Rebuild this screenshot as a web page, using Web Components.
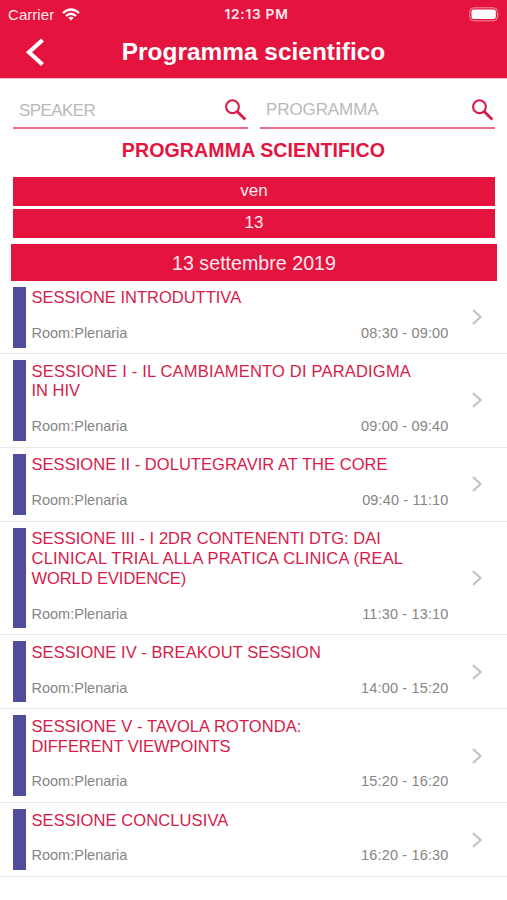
<!DOCTYPE html>
<html lang="it">
<head>
<meta charset="utf-8">
<title>Programma scientifico</title>
<style>
html,body{margin:0;padding:0;background:#fff}
body{width:507px;height:900px;overflow:hidden;font-family:"Liberation Sans",Arial,sans-serif;--red:#e5143f;--accent:#d81b4a}
</style>
</head>
<body>
<program-screen></program-screen>
<script>
const define = (name, html, setup) => customElements.define(name, class extends HTMLElement {
  connectedCallback() {
    if (this.shadowRoot) return;
    const root = this.attachShadow({ mode: 'open' });
    root.innerHTML = html;
    if (setup) setup(this, root);
  }
});

define('status-bar', `
<style>
:host{display:grid;grid-template-columns:1fr auto 1fr;align-items:center;height:27px;padding:0 6px 0 8px;color:#ffe9ee}
.left{display:flex;align-items:center;gap:8px;font-size:15px;line-height:27px;letter-spacing:.05px}
.time{font:600 13.7px/29px Inter,"Liberation Sans",sans-serif;letter-spacing:.75px;margin-right:-4px}
.right{display:flex;justify-content:flex-end}
svg{display:block}
</style>
<div class="left"><span>Carrier</span>
<svg width="18" height="13" viewBox="0 0 18 13" fill="none" stroke="#fff" stroke-width="2.3"><path d="M1 5Q9-2 17 5"/><path d="M4 8Q9 3.5 14 8"/><path d="M9 12.5L6.3 9.8Q9 7.6 11.7 9.8Z" fill="#fff" stroke="none"/></svg></div>
<span class="time">12:13 PM</span>
<div class="right"><svg width="32" height="15" viewBox="0 0 32 15"><rect x=".8" y=".8" width="27.6" height="13" rx="3.8" fill="none" stroke="#f58da2" stroke-width="1"/><rect x="2.5" y="2.5" width="24.3" height="9.6" rx="2" fill="#fff"/><path d="M29.7 5.2q1.7 2.1 0 4.2z" fill="#f58da2"/></svg></div>`);

define('nav-bar', `
<style>
:host{display:grid;grid-template-columns:60px 1fr 60px;height:52px;color:#fff}
svg{display:block;margin:10px 0 0 25px}
h1{margin:0;text-align:center;font-size:24.4px;line-height:49px;font-weight:700;white-space:nowrap;font-variant-ligatures:none;letter-spacing:.03px}
</style>
<svg width="21" height="30" viewBox="0 0 21 30" fill="none" stroke="#fff" stroke-width="4.2"><path d="M17.5 3L4 15.2L17.5 27.5"/></svg>
<h1><slot></slot></h1>`);

define('search-field', `
<style>
:host{display:flex;justify-content:space-between;align-items:flex-start;height:34px;border-bottom:2px solid #ef6c88;padding:0 0 0 6px;box-sizing:border-box;color:#b9b9b9}
span{font-size:17px;line-height:20px;margin-top:var(--label-top,7px);letter-spacing:var(--label-spacing,0)}
svg{display:block;margin:3px 0 0}
</style>
<span><slot></slot></span>
<svg width="24" height="24" viewBox="0 0 24 24" fill="none" stroke="#d81b4a"><circle cx="8.5" cy="8.7" r="6.4" stroke-width="2.1"/><path d="M13.2 13.4L21.3 21.5" stroke-width="2.8"/></svg>`);

define('date-band', `
<style>
:host{display:block;background:var(--red);color:#ffe9ee;text-align:center;font-size:17px;line-height:27px;height:28.5px}
:host([large]){font-size:19.6px;line-height:38px;height:36.5px;letter-spacing:.03px}
</style><slot></slot>`);

define('session-row', `
<style>
:host{display:flex;border-bottom:1px solid #e9e9eb;padding:6px 24px 6px 13px;align-items:stretch}
:host(:first-child){padding-top:6.5px;padding-bottom:5.5px}
.bar{width:12.5px;background:#514d9d;flex:none}
.body{width:417px;margin-left:6px;flex:none}
h2{margin:1.5px 0 0;font-size:16.5px;line-height:19.75px;font-weight:400;color:var(--accent)}
::slotted(span){display:block;white-space:nowrap}
.meta{display:flex;justify-content:space-between;margin-top:15px;height:24.75px;font-size:14.5px;line-height:20px;color:#858585}
.time{letter-spacing:.15px}
svg{display:block;align-self:center;margin-left:auto}
</style>
<div class="bar"></div>
<div class="body"><h2><slot></slot></h2><div class="meta"><span>Room:Plenaria</span><span class="time"></span></div></div>
<svg width="12" height="18" viewBox="0 0 12 18" fill="none" stroke="#c3c3c6" stroke-width="2.2"><path d="M2 2L9.5 9L2 16"/></svg>`,
(el, root) => { root.querySelector('.time').textContent = el.getAttribute('time'); });

define('program-screen', `
<style>
:host{display:block;width:507px;height:900px;background:#fff}
header{background:var(--red);height:79px;border-bottom:1px solid #f7bcc8;box-sizing:border-box}
.search{display:grid;grid-template-columns:1fr 1fr;gap:12px;padding:16px 12px 0 13px}
.heading{margin:9px 0 15px;text-align:center;color:var(--red);font-size:19.6px;line-height:24px;font-weight:700;letter-spacing:.08px}
.days{display:grid;gap:3.5px;padding:0 12px 0 13px}
.date{padding:0 10px 0 11px;margin-top:6.5px}
.list{margin-top:-.5px}
</style>
<header><status-bar></status-bar><nav-bar>Programma scientifico</nav-bar></header>
<section class="search"><search-field style="--label-top:6px;--label-spacing:-.6px">SPEAKER</search-field><search-field style="--label-top:5px;--label-spacing:-.1px">PROGRAMMA</search-field></section>
<h2 class="heading">PROGRAMMA SCIENTIFICO</h2>
<div class="days"><date-band>ven</date-band><date-band>13</date-band></div>
<div class="date"><date-band large>13 settembre 2019</date-band></div>
<main class="list">
<session-row time="08:30 - 09:00"><span>SESSIONE INTRODUTTIVA</span></session-row>
<session-row time="09:00 - 09:40"><span style="letter-spacing:.19px">SESSIONE I - IL CAMBIAMENTO DI PARADIGMA</span><span>IN HIV</span></session-row>
<session-row time="09:40 - 11:10"><span style="letter-spacing:.04px">SESSIONE II - DOLUTEGRAVIR AT THE CORE</span></session-row>
<session-row time="11:30 - 13:10"><span style="letter-spacing:.05px">SESSIONE III - I 2DR CONTENENTI DTG: DAI</span><span style="letter-spacing:.21px">CLINICAL TRIAL ALLA PRATICA CLINICA (REAL</span><span style="letter-spacing:-.08px">WORLD EVIDENCE)</span></session-row>
<session-row time="14:00 - 15:20"><span style="letter-spacing:.06px">SESSIONE IV - BREAKOUT SESSION</span></session-row>
<session-row time="15:20 - 16:20"><span style="letter-spacing:.09px">SESSIONE V - TAVOLA ROTONDA:</span><span style="letter-spacing:-.07px">DIFFERENT VIEWPOINTS</span></session-row>
<session-row time="16:20 - 16:30"><span style="letter-spacing:.1px">SESSIONE CONCLUSIVA</span></session-row>
</main>`);
</script>
</body>
</html>
